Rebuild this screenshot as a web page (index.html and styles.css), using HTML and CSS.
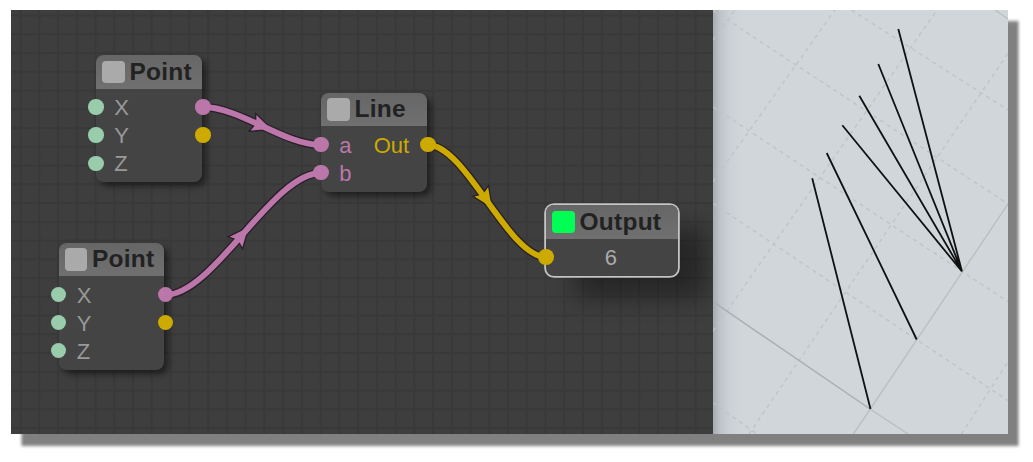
FILE: index.html
```
<!DOCTYPE html>
<html lang="en">
<head>
    <meta charset="UTF-8">
    <meta name="viewport" content="width=device-width, initial-scale=1.0">
    <title>Node Editor</title>
    <link rel="stylesheet" href="styles.css">
</head>
<body>
    <main class="editor">
        <section class="canvas">
            <svg class="wires" viewBox="11 10 702 424">
                <defs>
                    <path id="wire-a" d="M203 107C240 107 284 145 321 145"/>
                    <path id="wire-b" d="M165 295C214 295 272 173 321 173"/>
                    <path id="wire-out" d="M428 145C466 145 508 257 546 257"/>
                    <path id="arrow" d="M10 0L-8.5 -8.3L-5.5 0L-8.5 8.3Z"/>
                </defs>
                <g class="wire pink">
                    <use href="#wire-a" class="outline"/>
                    <use href="#arrow" class="arrow" transform="translate(261.5 125.7) rotate(20)"/>
                    <use href="#wire-a" class="line"/>
                </g>
                <g class="wire pink">
                    <use href="#wire-b" class="outline"/>
                    <use href="#arrow" class="arrow" transform="translate(241.5 235.5) rotate(-50)"/>
                    <use href="#wire-b" class="line"/>
                </g>
                <g class="wire gold">
                    <use href="#wire-out" class="outline"/>
                    <use href="#arrow" class="arrow" transform="translate(486 199) rotate(56)"/>
                    <use href="#wire-out" class="line"/>
                </g>
            </svg>

            <div class="node point-top">
                <div class="node-header"><span class="swatch"></span>Point</div>
                <div class="node-body">
                    <div class="row"><i class="port mint"></i><span>X</span><i class="port pink out"></i></div>
                    <div class="row"><i class="port mint"></i><span>Y</span><i class="port gold out"></i></div>
                    <div class="row"><i class="port mint"></i><span>Z</span></div>
                </div>
            </div>

            <div class="node point-bottom">
                <div class="node-header"><span class="swatch"></span>Point</div>
                <div class="node-body">
                    <div class="row"><i class="port mint"></i><span>X</span><i class="port pink out"></i></div>
                    <div class="row"><i class="port mint"></i><span>Y</span><i class="port gold out"></i></div>
                    <div class="row"><i class="port mint"></i><span>Z</span></div>
                </div>
            </div>

            <div class="node line-node">
                <div class="node-header"><span class="swatch"></span>Line</div>
                <div class="node-body">
                    <div class="row"><i class="port pink"></i><span class="pink-text">a</span><span class="out-label">Out</span><i class="port gold out"></i></div>
                    <div class="row"><i class="port pink"></i><span class="pink-text">b</span></div>
                </div>
            </div>

            <div class="node output-node">
                <div class="node-header"><span class="swatch active"></span>Output</div>
                <div class="node-body">
                    <div class="row"><i class="port gold"></i><span class="value">6</span></div>
                </div>
            </div>
        </section>

        <section class="viewport">
            <svg class="scene" viewBox="713 10 295 424">
                <!-- ground grid -->
                <g class="grid-dashed">
                    <path d="M713 402.7L757 434M713 203.5L1008 400.7M713 107L1008 301.7M713 10.5L1008 204M851.5 10L1008 110"/>
                    <path d="M961.5 434L1008 361.7M749 434L1008 53.3M713 331L937 10M713 181.7L835 10M713 40L735 10"/>
                </g>
                <path class="grid-solid" d="M853.5 434L1008 204M995 10L1008 19M870 409L908 434"/>
                <path class="grid-axis" d="M713 301.7L870 409"/>
                <!-- generated lines -->
                <path class="result" d="M898.3 29L962 271.5M878.3 64L962 271.5M859.3 95.7L962 271.5M842.3 125.3L962 271.5M826.7 153L916.7 339.5M812.2 178.3L870.5 409"/>
            </svg>
        </section>
    </main>
</body>
</html>
```
FILE: styles.css
```
body {
    margin: 0;
    padding: 10px 25px 28px 11px;
    background: #fff;
    font-family: "Liberation Sans", Arial, sans-serif;
}

.editor {
    display: flex;
    height: 424px;
    box-shadow: 10px 11.5px 3px 0.5px #808080;
}

.canvas {
    position: relative;
    width: 702px;
    overflow: hidden;
    background-color: #3e3e3e;
    background-image:
        linear-gradient(to right, #393939 2px, transparent 2.5px),
        linear-gradient(to bottom, #393939 2px, transparent 2.5px);
    background-size: 18.76px 18.76px;
    background-position: 8.5px 4.5px;
}

.wires {
    display: block;
    width: 702px;
    height: 424px;
}

.wire path,
.wire use {
    fill: none;
}

.wire .outline {
    stroke: #2a2028;
    stroke-width: 8.5;
}

.wire .line {
    stroke: currentColor;
    stroke-width: 5.8;
}

.wire .arrow {
    fill: currentColor;
    stroke: #2a2028;
    stroke-width: 2.6;
    paint-order: stroke;
}

.wire.pink {
    color: #bb77aa;
}

.wire.gold {
    color: #ccaa00;
}

/* nodes are placed freely on the canvas */
.node {
    position: absolute;
    width: 105.5px;
    border-radius: 8px;
    background: #444;
    box-shadow: 4px 4px 6px rgba(0, 0, 0, 0.5);
}

.point-top {
    left: 85px;
    top: 45px;
}

.point-bottom {
    left: 47.5px;
    top: 232.5px;
}

.line-node {
    left: 310px;
    top: 82.5px;
}

.output-node {
    left: 535px;
    top: 195px;
    width: 131.5px;
    box-shadow: 0 0 0 1.8px #c4c4c4, 28px 22px 24px rgba(0, 0, 0, 0.38);
}

.node-header {
    display: flex;
    align-items: center;
    gap: 5px;
    height: 33.5px;
    padding-left: 6px;
    box-sizing: border-box;
    border-radius: 8px 8px 0 0;
    background: linear-gradient(#666, #707070);
    color: #222;
    font-size: 24.5px;
    font-weight: bold;
    letter-spacing: 0.25px;
}

.swatch {
    width: 22.5px;
    height: 22.5px;
    border-radius: 4px;
    background: #aaa;
}

.swatch.active {
    background: #00ff55;
}

.node-body {
    padding: 4.5px 0 5px;
}

.row {
    display: flex;
    align-items: center;
    height: 28.1px;
    color: #999;
    font-size: 22px;
    line-height: 28px;
}

.row span {
    padding-top: 2.5px;
}

.port {
    flex: none;
    width: 15.4px;
    height: 15.4px;
    margin: 0 10.5px 0 -7.7px;
    border-radius: 50%;
}

.port.out {
    margin: 0 -9px 0 auto;
}

.port.mint {
    background: #99ccaa;
}

.port.pink {
    background: #bb77aa;
}

.port.gold {
    background: #ccaa00;
}

.row .pink-text {
    color: #bb77aa;
}

.out-label {
    margin-left: auto;
    margin-right: 11px;
    color: #ccaa00;
}

.row .out-label {
    color: #ccaa00;
}

.out-label + .port.out {
    margin-left: 0;
}

.output-node .node-body {
    padding-bottom: 4.5px;
}

.output-node .value {
    flex: 1;
    padding-right: 20px;
    color: #aaa;
    text-align: center;
}

.viewport {
    flex: 1;
    background: linear-gradient(to right, #a5acb2, #bec4c9 7px, #cad0d4 16px, #d0d6da 28px);
}

.scene {
    display: block;
    width: 100%;
    height: 424px;
}

.scene path {
    fill: none;
}

.grid-dashed {
    stroke: #bfc4c8;
    stroke-width: 1.4;
    stroke-dasharray: 4 4;
}

.grid-solid {
    stroke: #bbbfc2;
    stroke-width: 1.4;
}

.grid-axis {
    stroke: #aaaeb1;
    stroke-width: 1.5;
}

.result {
    stroke: #111;
    stroke-width: 1.8;
}
```
